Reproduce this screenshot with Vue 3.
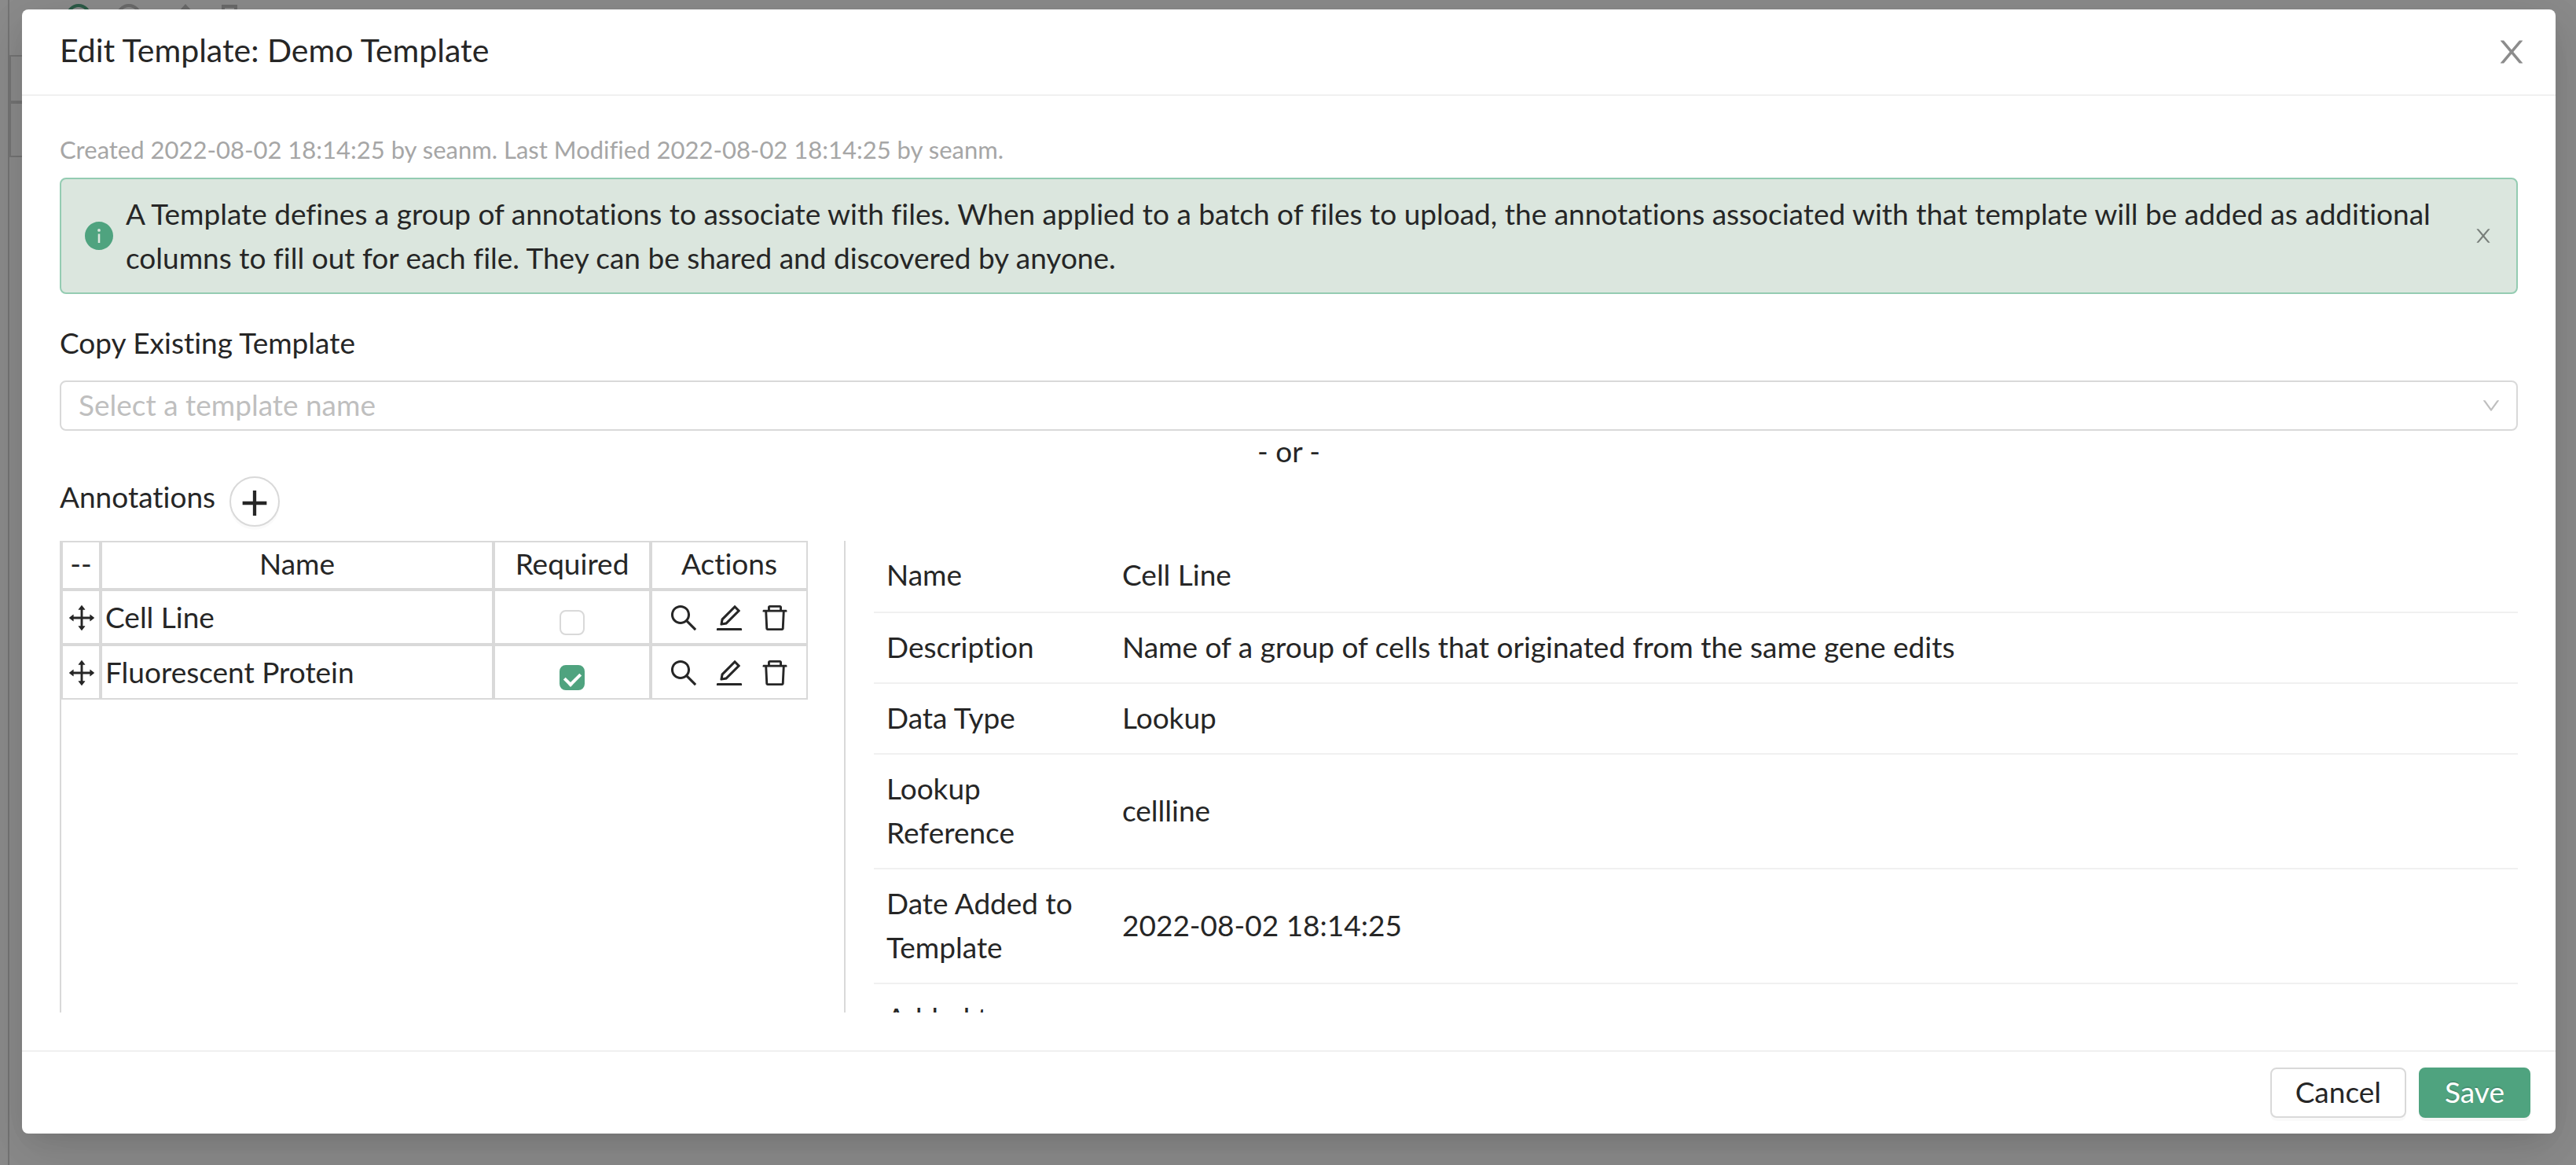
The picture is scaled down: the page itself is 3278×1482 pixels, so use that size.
<script setup>
import { ref } from 'vue'

const icons = {
  close: 'M563.8 512l262.5-312.9c4.4-5.2.7-13.1-6.1-13.1h-79.8c-4.7 0-9.2 2.1-12.3 5.7L511.6 449.8 295.1 191.7c-3-3.6-7.5-5.7-12.3-5.7H203c-6.8 0-10.5 7.9-6.1 13.1L459.4 512 196.9 824.9A7.95 7.95 0 00203 838h79.8c4.7 0 9.2-2.1 12.3-5.7l216.5-258.1 216.5 258.1c3 3.6 7.5 5.7 12.3 5.7h79.8c6.8 0 10.5-7.9 6.1-13.1L563.8 512z',
  down: 'M884 256h-75c-5.1 0-9.9 2.5-12.9 6.6L512 654.2 227.9 262.6c-3-4.1-7.8-6.6-12.9-6.6h-75c-6.5 0-10.3 7.4-6.5 12.7l352.6 486.1c12.8 17.6 39 17.6 51.7 0l352.6-486.1c3.9-5.3.1-12.7-6.4-12.7z',
  info: 'M512 64C264.6 64 64 264.6 64 512s200.6 448 448 448 448-200.6 448-448S759.4 64 512 64zm32 664c0 4.4-3.6 8-8 8h-48c-4.4 0-8-3.6-8-8V456c0-4.4 3.6-8 8-8h48c4.4 0 8 3.6 8 8v272zm-32-344a48.01 48.01 0 010-96 48.01 48.01 0 010 96z',
  plus: 'M464 152h96v720h-96z M168 464h688v96H168z',
  drag: 'M909.3 506.3L781.7 405.6a7.23 7.23 0 00-11.7 5.7V476H548V254h64.8c6 0 9.4-7 5.7-11.7L517.7 114.7a7.14 7.14 0 00-11.3 0L405.6 242.3a7.23 7.23 0 005.7 11.7H476v222H254v-64.8c0-6-7-9.4-11.7-5.7L114.7 506.3a7.14 7.14 0 000 11.3l127.5 100.8c4.7 3.7 11.7.4 11.7-5.7V548h222v222h-64.8c-6 0-9.4 7-5.7 11.7l100.8 127.5c2.9 3.7 8.5 3.7 11.3 0l100.8-127.5c3.7-4.7.4-11.7-5.7-11.7H548V548h222v64.8c0 6 7 9.4 11.7 5.7l127.5-100.8a7.3 7.3 0 00.1-11.4z',
}

const actions = [
  {
    label: 'View',
    path: 'M909.6 854.5L649.9 594.8C690.2 542.7 712 479 712 412c0-80.2-31.3-155.4-87.9-212.1-56.6-56.7-132-87.9-212.1-87.9s-155.5 31.3-212.1 87.9C143.2 256.5 112 331.8 112 412c0 80.1 31.3 155.5 87.9 212.1C256.5 680.8 331.8 712 412 712c67 0 130.6-21.8 182.7-62l259.7 259.6a8.2 8.2 0 0011.6 0l43.6-43.5a8.2 8.2 0 000-11.6zM570.4 570.4C528 612.7 471.8 636 412 636s-116-23.3-158.4-65.6C211.3 528 188 471.8 188 412s23.3-116.1 65.6-158.4C296 211.3 352.2 188 412 188s116.1 23.2 158.4 65.6S636 352.2 636 412s-23.3 116.1-65.6 158.4z',
  },
  {
    label: 'Edit',
    path: 'M257.7 752c2 0 4-.2 6-.5L431.9 722c2-.4 3.9-1.3 5.3-2.8l423.9-423.9a9.96 9.96 0 000-14.1L694.9 114.9c-1.9-1.9-4.4-2.9-7.1-2.9s-5.2 1-7.1 2.9L256.8 538.8c-1.5 1.5-2.4 3.3-2.8 5.3l-29.5 168.2a33.5 33.5 0 009.4 29.8c6.6 6.4 14.9 9.9 23.8 9.9zm67.4-174.4L687.8 215l73.3 73.3-362.7 362.6-88.9 15.7 15.6-89zM880 836H144c-17.7 0-32 14.3-32 32v36c0 4.4 3.6 8 8 8h784c4.4 0 8-3.6 8-8v-36c0-17.7-14.3-32-32-32z',
  },
  {
    label: 'Delete',
    path: 'M360 184h-8c4.4 0 8-3.6 8-8v8h304v-8c0 4.4 3.6 8 8 8h-8v72h72v-80c0-35.3-28.7-64-64-64H352c-35.3 0-64 28.7-64 64v80h72v-72zm504 72H160c-17.7 0-32 14.3-32 32v32c0 4.4 3.6 8 8 8h60.4l24.7 523c1.6 34.1 29.8 61 63.9 61h454c34.2 0 62.3-26.8 63.9-61l24.7-523H888c4.4 0 8-3.6 8-8v-32c0-17.7-14.3-32-32-32zM731.3 840H292.7l-24.2-512h487l-24.2 512z',
  },
]

const annotations = ref([
  { name: 'Cell Line', required: false },
  { name: 'Fluorescent Protein', required: true },
])

const details = [
  ['Name', 'Cell Line'],
  ['Description', 'Name of a group of cells that originated from the same gene edits'],
  ['Data Type', 'Lookup'],
  ['Lookup Reference', 'cellline'],
  ['Date Added to Template', '2022-08-02 18:14:25'],
  ['Added to Template By', 'seanm'],
]
</script>

<template>
  <div class="page" aria-hidden="true">
    <div class="toolbar">
      <svg width="240" height="28" viewBox="0 0 240 28" fill="none" stroke-width="4">
        <circle cx="20" cy="18" r="14" stroke="#2d5c48" />
        <circle cx="84" cy="18" r="14" stroke="#6b6b6b" />
        <path d="M147 15l9-10 9 10M156 5v20" stroke="#6b6b6b" />
        <path d="M204 26V5h16v21" stroke="#6b6b6b" />
      </svg>
    </div>
    <div class="grid">
      <div class="grid-row"></div>
      <div class="grid-row"></div>
    </div>
  </div>

  <div class="overlay">
    <section class="modal" role="dialog" aria-labelledby="title">
      <header class="head">
        <h1 id="title">Edit Template: Demo Template</h1>
        <button class="plain close" aria-label="Close">
          <svg class="i40" viewBox="64 64 896 896"><path :d="icons.close" /></svg>
        </button>
      </header>

      <div class="body">
        <p class="meta">Created 2022-08-02 18:14:25 by seanm. Last Modified 2022-08-02 18:14:25 by seanm.</p>
        <div class="alert" role="note">
          <svg class="i36 info" viewBox="64 64 896 896"><path :d="icons.info" /></svg>
          <p>
            A Template defines a group of annotations to associate with files. When applied to a batch of files to
            upload, the annotations associated with that template will be added as additional columns to fill out for
            each file. They can be shared and discovered by anyone.
          </p>
          <button class="plain close" aria-label="Dismiss">
            <svg class="i24" viewBox="64 64 896 896"><path :d="icons.close" /></svg>
          </button>
        </div>

        <label class="copy-label" for="copy">Copy Existing Template</label>
        <div class="select">
          <select id="copy">
            <option>Select a template name</option>
          </select>
          <svg class="i24 arrow" viewBox="64 64 896 896"><path :d="icons.down" /></svg>
        </div>
        <p class="or">- or -</p>

        <div class="section">
          <h2>Annotations</h2>
          <button class="add" aria-label="Add annotation">
            <svg class="i40" viewBox="64 64 896 896"><path :d="icons.plus" /></svg>
          </button>
        </div>

        <div class="split">
          <div class="list">
            <table class="annotations">
              <thead>
                <tr>
                  <th class="c-drag">--</th>
                  <th class="c-name">Name</th>
                  <th class="c-side">Required</th>
                  <th class="c-side">Actions</th>
                </tr>
              </thead>
              <tbody>
                <tr v-for="a in annotations" :key="a.name">
                  <td class="drag">
                    <svg class="i36" viewBox="64 64 896 896"><path :d="icons.drag" /></svg>
                  </td>
                  <td class="name">{{ a.name }}</td>
                  <td class="check">
                    <input v-model="a.required" type="checkbox" :aria-label="a.name + ' required'" />
                  </td>
                  <td>
                    <div class="actions">
                      <button v-for="x in actions" :key="x.label" class="plain" :aria-label="x.label">
                        <svg class="i36" viewBox="64 64 896 896"><path :d="x.path" /></svg>
                      </button>
                    </div>
                  </td>
                </tr>
              </tbody>
            </table>
          </div>
          <div class="detail">
            <table class="props">
              <tbody>
                <tr v-for="[k, v] in details" :key="k">
                  <th scope="row">{{ k }}</th>
                  <td>{{ v }}</td>
                </tr>
              </tbody>
            </table>
          </div>
        </div>
      </div>

      <footer class="foot">
        <button class="btn">Cancel</button>
        <button class="btn primary">Save</button>
      </footer>
    </section>
  </div>
</template>

<style>
body {
  margin: 0;
  background: #8c8c8c;
}
</style>

<style scoped>
* {
  box-sizing: border-box;
}
.page {
  min-height: 100vh;
  margin-left: 10px;
  border-left: 2px solid #757575;
}
.toolbar {
  height: 70px;
  padding: 3px 68px;
}
.grid {
  margin-right: 60px;
}
.grid-row {
  height: 60px;
  border: 2px solid #757575;
}
.grid-row + .grid-row {
  height: 70px;
}
.overlay {
  position: absolute;
  inset: 0;
  padding: 12px 26px 0 28px;
  font-family: Lato, "Noto Sans", sans-serif;
  font-size: 37px;
  font-variant-ligatures: no-common-ligatures;
  line-height: 56px;
  color: #262626;
}
.modal {
  background: #fff;
  border-radius: 8px;
  box-shadow: 0 12px 32px -16px rgba(0, 0, 0, 0.12), 0 18px 56px rgba(0, 0, 0, 0.08), 0 24px 96px 32px rgba(0, 0, 0, 0.05);
}
svg {
  display: block;
  flex: none;
}
.overlay svg {
  fill: currentColor;
}
.i24 { width: 24px; height: 24px; }
.i36 { width: 36px; height: 36px; }
.i40 { width: 40px; height: 40px; }
h1, h2, p {
  margin: 0;
  font-weight: 400;
}
h2 {
  font-size: 37px;
  line-height: 52px;
}
button, select {
  font: inherit;
  font-variant-ligatures: inherit;
  color: inherit;
}
.plain {
  display: block;
  padding: 0;
  border: 0;
  background: none;
}
.close {
  color: rgba(0, 0, 0, 0.45);
}
.head {
  display: flex;
  align-items: center;
  justify-content: space-between;
  padding: 32px 36px 32px 48px;
  border-bottom: 2px solid #f0f0f0;
}
h1 {
  padding-bottom: 4px;
  font-size: 41px;
  line-height: 40px;
}
.body {
  padding: 48px;
}
.meta {
  padding-bottom: 16px;
  font-size: 31px;
  line-height: 40px;
  color: #a6a6a6;
}
.alert {
  display: flex;
  align-items: center;
  gap: 16px;
  padding: 16px 30px;
  border: 2px solid #94ccb2;
  border-radius: 8px;
  background: #dbe6de;
}
.alert p {
  flex: 1;
}
.info {
  color: #4fa37f;
}
.copy-label {
  display: block;
  margin: 34px 0 20px;
}
.select {
  position: relative;
}
.select select {
  display: block;
  width: 100%;
  height: 64px;
  padding: 0 60px 2px 22px;
  border: 2px solid #d9d9d9;
  border-radius: 8px;
  background: #fff;
  color: #bfbfbf;
  appearance: none;
}
.arrow {
  position: absolute;
  top: 20px;
  right: 22px;
  color: #bfbfbf;
  pointer-events: none;
}
.or {
  padding-bottom: 4px;
  line-height: 52px;
  text-align: center;
}
.section {
  display: flex;
  gap: 18px;
  padding: 2px 0 18px;
}
.add {
  display: flex;
  align-items: center;
  justify-content: center;
  width: 64px;
  height: 64px;
  padding: 4px 0 0;
  border: 2px solid #d9d9d9;
  border-radius: 50%;
  background: #fff;
  box-shadow: 0 4px 0 rgba(0, 0, 0, 0.02);
}
.split {
  display: flex;
  height: 600px;
  overflow: hidden;
}
.list {
  flex: 0 0 1000px;
  border: solid #d9d9d9;
  border-width: 0 2px;
}
table {
  border-collapse: separate;
  border-spacing: 0;
}
th {
  font-weight: 400;
}
.annotations {
  table-layout: fixed;
  width: 950px;
}
.annotations th,
.annotations td {
  padding: 0;
  border: 2px solid #d9d9d9;
}
.annotations th {
  height: 62px;
  padding-bottom: 4px;
  line-height: 52px;
}
.annotations td {
  height: 70px;
}
.c-drag { width: 50px; }
.c-side { width: 200px; }
.annotations .drag {
  padding: 2px 0 0 6px;
}
.annotations .name {
  padding-left: 4px;
}
.annotations .check {
  padding-top: 14px;
}
.check input {
  display: flex;
  justify-content: center;
  width: 32px;
  height: 32px;
  margin: 0 auto;
  border: 2px solid #d9d9d9;
  border-radius: 8px;
  background: #fff;
  appearance: none;
}
.check input:checked {
  border-color: #4fa37f;
  background: #4fa37f;
}
.check input:checked::after {
  content: '';
  box-sizing: border-box;
  width: 13px;
  height: 20px;
  margin-top: 4px;
  border: solid #fff;
  border-width: 0 4px 4px 0;
  transform: rotate(45deg);
}
.actions {
  display: flex;
  justify-content: center;
  gap: 22px;
  padding-top: 2px;
}
.detail {
  flex: 1;
  padding-left: 36px;
}
.props {
  width: 100%;
}
.props th,
.props td {
  padding: 15px 16px 17px;
  border-bottom: 2px solid #f0f0f0;
  text-align: left;
}
.props tr:first-child > * {
  padding-bottom: 19px;
}
.props th {
  width: 300px;
}
.foot {
  display: flex;
  justify-content: flex-end;
  gap: 16px;
  padding: 20px 32px;
  border-top: 2px solid #f0f0f0;
}
.btn {
  min-width: 142px;
  height: 64px;
  padding: 0 30px 2px;
  border: 2px solid #d9d9d9;
  border-radius: 8px;
  background: #fff;
  box-shadow: 0 4px 0 rgba(0, 0, 0, 0.02);
}
.primary {
  border-color: #4fa37f;
  background: #4fa37f;
  color: #fff;
  text-shadow: 0 -2px 0 rgba(0, 0, 0, 0.12);
  box-shadow: 0 4px 0 rgba(0, 0, 0, 0.04);
}
</style>
